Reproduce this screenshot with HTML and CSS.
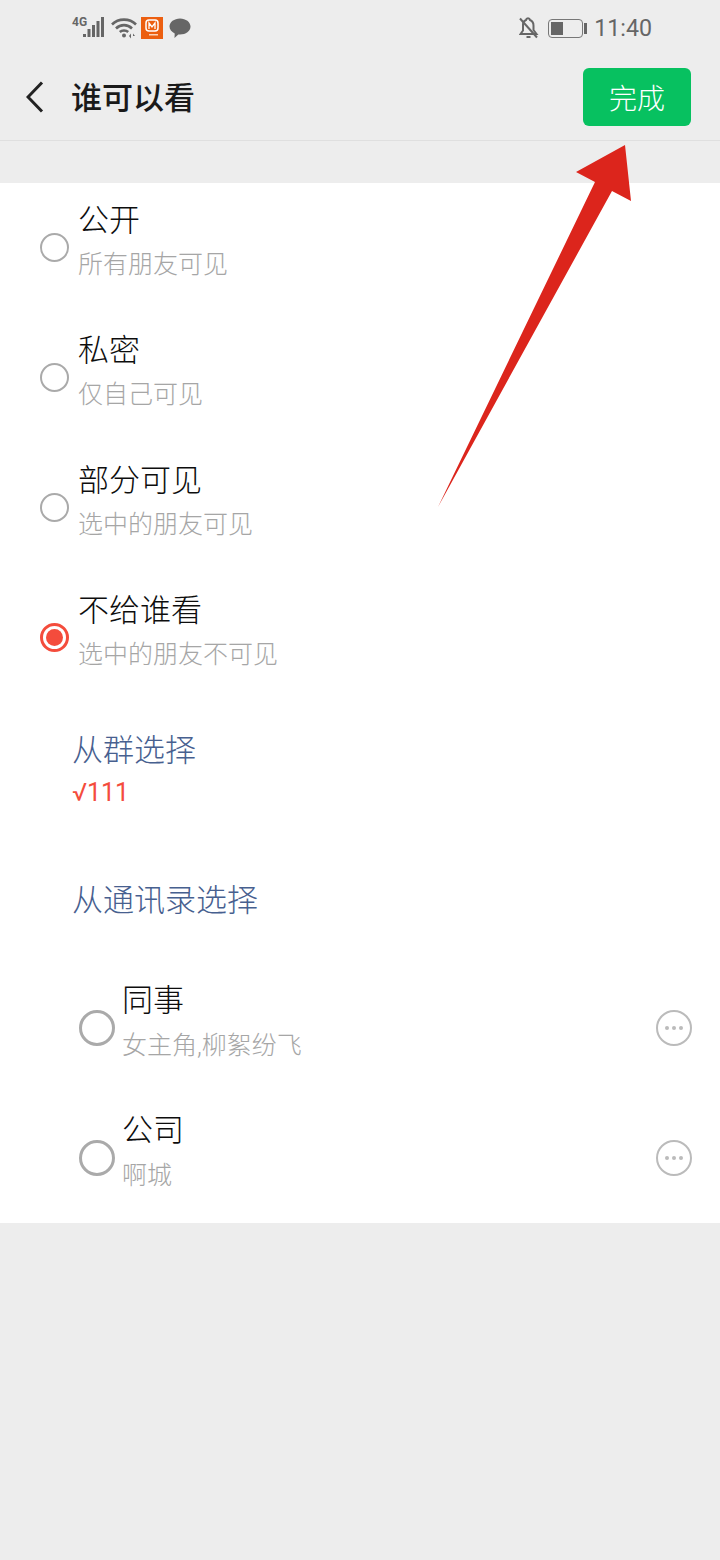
FILE: index.html
```html
<!DOCTYPE html>
<html lang="zh-CN">
	<head>
		<meta charset="UTF-8" />
		<meta name="viewport" content="width=device-width, initial-scale=1.0" />
		<title>谁可以看</title>
		<link rel="stylesheet" href="styles.css">
	</head>
	<body>
		<div class="status-bar">
			<div class="status-left">
				<div class="signal">
					<span class="signal-label">4G</span>
					<svg class="signal-bars" width="21" height="21" viewBox="0 0 21 21">
						<rect x="0" y="17" width="3" height="3" />
						<rect x="4.500" y="12" width="3" height="8" />
						<rect x="9" y="8" width="3" height="12" />
						<rect x="13.500" y="4" width="3" height="16" />
						<rect x="18" y="0" width="3" height="20" />
					</svg>
				</div>
				<svg class="wifi" width="26" height="22" viewBox="0 0 26 22" fill="none" stroke="#666" stroke-width="2.600">
					<path d="M1 7.500C7.500 1 18.500 1 25 7.500" />
					<path d="M5 11.500C9.500 7 16.500 7 21 11.500" />
					<path d="M8.800 15C11 13 15 13 17.200 15" />
					<circle cx="13" cy="18.500" r="2" fill="#666" stroke="none" />
					<path d="M18 19l2-2.500v5zM22 16.500l2 2.500h-2z" fill="#666" stroke="none" />
				</svg>
				<svg class="app-icon" width="22" height="22" viewBox="0 0 22 22">
					<rect width="22" height="22" fill="#ec5f10" />
					<rect x="5" y="3" width="12" height="11" rx="3" fill="none" stroke="#fff" stroke-width="1.500" />
					<path d="M8 12V6l3 4 3-4v6" fill="none" stroke="#fff" stroke-width="1.300" />
					<rect x="8" y="17" width="9" height="1.500" fill="#fbd3b8" />
				</svg>
				<svg class="chat-icon" width="22" height="22" viewBox="0 0 22 22">
					<path d="M11 1.500c5.800 0 10.500 3.600 10.500 8.100s-4.700 8-10.500 8c-.6 0-1.200 0-1.700-.1L5.500 21l.2-4.600C2.500 15 .5 12.500.5 9.600.5 5.100 5.200 1.500 11 1.500z" fill="#666" />
				</svg>
			</div>
			<div class="status-right">
				<svg class="bell-off" width="20" height="23" viewBox="0 0 20 23" fill="none" stroke="#666" stroke-width="2">
					<path d="M4 7.500C4 5 5 3.800 7 3c.4-2.400 3.600-2.400 4 0 2.400.9 3.500 2.900 3.500 5.500v4.500l3 4H1.500l2.500-3.500z" />
					<path d="M7.500 20h4" />
					<path d="M1 1.500l17 19" />
				</svg>
				<div class="battery">
					<div class="battery-body"><div class="battery-level"></div></div>
					<div class="battery-nub"></div>
				</div>
				<span class="clock">11:40</span>
			</div>
		</div>

		<div class="header">
			<svg class="back" width="18" height="32" viewBox="0 0 18 32" fill="none" stroke="#222" stroke-width="3">
				<path d="M16 1.500L2 16l14 14.500" />
			</svg>
			<h1>谁可以看</h1>
			<button class="done-btn">完成</button>
		</div>

		<div class="content">
			<div class="option">
				<div class="radio"></div>
				<div class="option-text">
					<div class="option-title">公开</div>
					<div class="option-sub">所有朋友可见</div>
				</div>
			</div>
			<div class="option">
				<div class="radio"></div>
				<div class="option-text">
					<div class="option-title">私密</div>
					<div class="option-sub">仅自己可见</div>
				</div>
			</div>
			<div class="option">
				<div class="radio"></div>
				<div class="option-text">
					<div class="option-title">部分可见</div>
					<div class="option-sub">选中的朋友可见</div>
				</div>
			</div>
			<div class="option">
				<div class="radio radio-checked"></div>
				<div class="option-text">
					<div class="option-title">不给谁看</div>
					<div class="option-sub">选中的朋友不可见</div>
				</div>
			</div>

			<div class="pick-group">
				<div class="pick-link">从群选择</div>
				<div class="pick-result">√111</div>
			</div>
			<div class="pick-contacts">
				<div class="pick-link">从通讯录选择</div>
			</div>

			<div class="tag-row">
				<div class="radio radio-big"></div>
				<div class="option-text">
					<div class="option-title">同事</div>
					<div class="option-sub">女主角,柳絮纷飞</div>
				</div>
				<div class="more"><span></span><span></span><span></span></div>
			</div>
			<div class="tag-row">
				<div class="radio radio-big"></div>
				<div class="option-text">
					<div class="option-title">公司</div>
					<div class="option-sub">啊城</div>
				</div>
				<div class="more"><span></span><span></span><span></span></div>
			</div>
		</div>

		<!-- red annotation arrow drawn over the screenshot -->
		<svg class="arrow" width="720" height="520" viewBox="0 0 720 520">
			<polygon points="625,145 576,172 595,182 438,507 612,191 631,201" fill="#dc251c" />
		</svg>
	</body>
</html>
```
FILE: styles.css
```css
* {
	margin: 0;
	padding: 0;
	box-sizing: border-box;
}

body {
	font-family: "Roboto", "Noto Sans CJK SC", sans-serif;
	background-color: #ededed;
	color: #1a1a1a;
	min-height: 100vh;
	position: relative;
}

/* Status bar */
.status-bar {
	height: 53px;
	display: flex;
	align-items: flex-start;
	justify-content: space-between;
	padding: 16px 68px 0 72px;
}

.status-left,
.status-right {
	display: flex;
	align-items: center;
}

.status-left {
	padding-top: 1px;
}

.signal {
	position: relative;
	width: 32px;
	height: 22px;
	margin-right: 7px;
}

.signal-label {
	position: absolute;
	top: 0;
	left: 0;
	font-family: "Liberation Sans Narrow", "Roboto", sans-serif;
	font-size: 12px;
	line-height: 10px;
	font-weight: 700;
	color: #666;
}

.signal-bars {
	position: absolute;
	right: 0;
	top: 0;
	fill: #666;
}

.wifi {
	margin-right: 4px;
}

.app-icon {
	margin-right: 6px;
}

.bell-off {
	margin-right: 9px;
}

.battery {
	display: flex;
	align-items: center;
	margin-right: 7px;
}

.battery-body {
	width: 35px;
	height: 19px;
	border: 1.500px solid #777;
	border-radius: 4px;
	padding: 2px;
}

.battery-level {
	width: 12px;
	height: 100%;
	background-color: #666;
}

.battery-nub {
	width: 3px;
	height: 11px;
	background-color: #666;
	margin-left: 1px;
}

.clock {
	font-size: 23.200px;
	line-height: 24px;
	color: #666;
}

/* Title bar */
.header {
	height: 88px;
	display: flex;
	align-items: center;
	padding: 0 29px 0 26px;
	border-bottom: 1px solid #dfdfdf;
}

.back {
	margin-right: 27px;
}

h1 {
	flex: 1;
	font-size: 31px;
	font-weight: 500;
	padding-bottom: 2px;
	color: #1a1a1a;
}

.done-btn {
	width: 108px;
	height: 58px;
	border: none;
	border-radius: 6px;
	background-color: #07c160;
	color: #fff;
	font-family: inherit;
	font-size: 28px;
	font-weight: 300;
}

/* Options list */
.content {
	margin-top: 42px;
	background-color: #fff;
	height: 1040px;
}

.option {
	height: 130px;
	display: flex;
	align-items: center;
	padding-left: 40px;
}

.option .radio {
	margin-bottom: 1px;
}

.radio {
	width: 29px;
	height: 29px;
	border: 2.500px solid #aaa;
	border-radius: 50%;
	margin-right: 9px;
	flex-shrink: 0;
	display: flex;
	align-items: center;
	justify-content: center;
}

.radio-checked {
	border-width: 3px;
	border-color: #f44c3c;
}

.radio-checked::after {
	content: "";
	width: 17px;
	height: 17px;
	border-radius: 50%;
	background-color: #f44c3c;
}

.radio-big {
	width: 36px;
	height: 36px;
	border-width: 3px;
	margin-right: 7px;
}

.option-text {
	flex: 1;
	padding-bottom: 12px;
}

.tag-row .option-text {
	padding-bottom: 12px;
}

.option-title {
	font-size: 31px;
	font-weight: 300;
	line-height: 44px;
	color: #0d0d0d;
}

.option-sub {
	font-size: 25px;
	font-weight: 300;
	line-height: 40px;
	margin-top: 2px;
	color: #a6a6a6;
}

.tag-row .option-sub {
	margin-top: 3px;
}

/* Pick from group / contacts */
.pick-group {
	height: 130px;
	padding: 26px 0 0 72px;
}

.pick-contacts {
	height: 130px;
	padding: 46px 0 0 72px;
}

.pick-link {
	font-size: 31px;
	font-weight: 300;
	line-height: 44px;
	color: #47608f;
}

.pick-result {
	font-size: 25px;
	line-height: 40px;
	color: #f44c3c;
}

.tag-row {
	height: 130px;
	display: flex;
	align-items: center;
	padding: 0 28px 0 79px;
}

.more {
	width: 36px;
	height: 36px;
	border: 2px solid #bbb;
	border-radius: 50%;
	display: flex;
	align-items: center;
	justify-content: center;
	gap: 3px;
}

.more span {
	width: 4px;
	height: 4px;
	border-radius: 50%;
	background-color: #bbb;
}

/* Annotation */
.arrow {
	position: absolute;
	top: 0;
	left: 0;
	pointer-events: none;
}
```
